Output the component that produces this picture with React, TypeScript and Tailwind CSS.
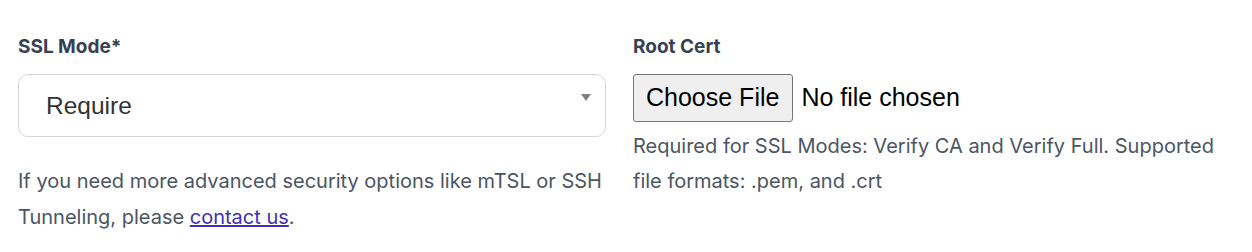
import React from 'react';

const labelCls = "block text-[19px] leading-[28px] font-bold text-[#374151]";

const App: React.FC = () => {
  return (
    <div className="w-full h-[252px] bg-white px-[18px] pt-[33px] font-['Inter',sans-serif]">
      <div className="grid grid-cols-[588px_588px] gap-[27px]">
        {/* SSL mode */}
        <div>
          <label className={labelCls}>SSL Mode*</label>
          <div className="relative mt-[13px]">
            <select
              defaultValue="require"
              className="appearance-none w-full h-[63px] rounded-[10px] border border-[#d6d6d6] bg-white pl-[27px] pt-[2px] text-[24.5px] text-[#333333] font-['Liberation_Sans',Arial,sans-serif] outline-none"
            >
              <option value="disable">Disable</option>
              <option value="require">Require</option>
              <option value="verify-ca">Verify CA</option>
              <option value="verify-full">Verify Full</option>
            </select>
            <svg className="absolute right-[15px] top-[20px] pointer-events-none" width="10" height="7" viewBox="0 0 10 7">
              <path d="M0 0h10L5 7z" fill="#808080" />
            </svg>
          </div>
          <p className="mt-[26px] text-[20px] leading-[36px] text-[#4b5563]">
            If you need more advanced security options like mTSL or SSH Tunneling, please{' '}
            <a href="#" className="text-[#4031b5] underline">contact us</a>.
          </p>
        </div>

        {/* Root cert */}
        <div>
          <label className={labelCls}>Root Cert</label>
          <div className="mt-[13px] flex items-center gap-[8px] font-['Liberation_Sans',Arial,sans-serif] text-[25px] text-black">
            <button className="h-[48px] rounded-[3px] border border-[#767676] bg-[#efefef] pl-[12px] pr-[13px]">
              Choose File
            </button>
            <span>No file chosen</span>
          </div>
          <p className="mt-[7px] text-[20px] leading-[35px] text-[#4b5563]">
            Required for SSL Modes: Verify CA and Verify Full. Supported file formats: .pem, and .crt
          </p>
        </div>
      </div>
    </div>
  );
};

export default App;
